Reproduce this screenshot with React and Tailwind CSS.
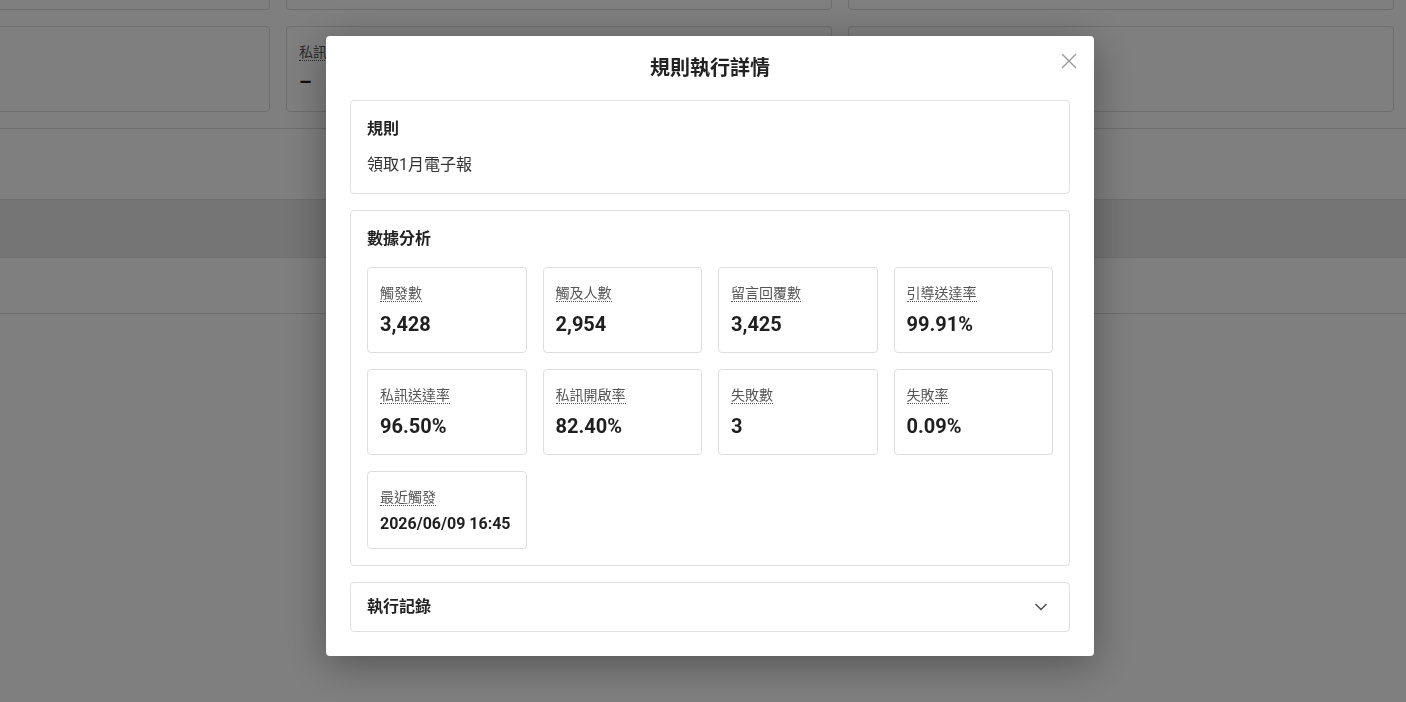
import { ChevronDown } from 'lucide-react';

const metrics = [
    { label: '觸發數', value: '3,428' },
    { label: '觸及人數', value: '2,954' },
    { label: '留言回覆數', value: '3,425' },
    { label: '引導送達率', value: '99.91%' },
    { label: '私訊送達率', value: '96.50%' },
    { label: '私訊開啟率', value: '82.40%' },
    { label: '失敗數', value: '3' },
    { label: '失敗率', value: '0.09%' },
    { label: '最近觸發', value: '2026/06/09 16:45', small: true },
];

const MetricCard = ({ label, value, small }) => (
    <div className="border border-[#dedede] rounded px-3 pt-[15px] pb-[14px] bg-white">
        <div className="text-sm leading-5 text-[#555]">
            <span className="border-b border-dotted border-[#555]">{label}</span>
        </div>
        <div className={`mt-[7px] font-bold text-[#1f1f1f] ${small ? 'text-base leading-5' : 'text-xl leading-7'}`}>
            {value}
        </div>
    </div>
);

// page sitting behind the dialog
const Background = () => (
    <div className="-mt-[76px]">
        <div className="flex gap-4 -ml-[276px]">
            <div className="w-[546px] shrink-0 h-[86px] border border-[#dcdcdc] rounded" />
            <div className="w-[546px] shrink-0 h-[86px] border border-[#dcdcdc] rounded" />
            <div className="w-[546px] shrink-0 h-[86px] border border-[#dcdcdc] rounded" />
        </div>
        <div className="flex gap-4 -ml-[276px] mt-4">
            <div className="w-[546px] shrink-0 h-[86px] border border-[#dcdcdc] rounded" />
            <div className="w-[546px] shrink-0 h-[86px] border border-[#dcdcdc] rounded px-3 pt-[15px]">
                <div className="text-sm leading-5 text-[#555]">
                    <span className="border-b border-dotted border-[#555]">私訊送達率</span>
                </div>
                <div className="mt-[6px] text-xl leading-7 font-bold text-[#1f1f1f]">–</div>
            </div>
            <div className="w-[546px] shrink-0 h-[86px] border border-[#dcdcdc] rounded" />
        </div>
        <div className="mt-4 border-t border-[#dcdcdc] h-[71px]" />
        <div className="h-[59px] bg-[#ebebeb] border-y border-[#dcdcdc]" />
        <div className="h-[56px] border-b border-[#dcdcdc]" />
    </div>
);

export default function App() {
    return (
        <div className="min-h-screen bg-white overflow-hidden font-[Roboto,'Noto_Sans_CJK_TC',sans-serif]">
            <Background />

            <div className="fixed inset-0 bg-black/50 flex items-start justify-center pt-9 pl-[14px]">
                <div className="relative w-[768px] bg-white rounded shadow-[0_8px_40px_rgba(0,0,0,0.35)] px-6 pb-6">
                    <button className="absolute top-[17px] right-[17px] w-4 h-4 text-[#9a9a9a]">
                        <svg width="16" height="16" viewBox="0 0 16 16" fill="none" stroke="currentColor" strokeWidth="1.4" strokeLinecap="round">
                            <path d="M1.5 1.5l13 13M14.5 1.5l-13 13" />
                        </svg>
                    </button>

                    <h2 className="pt-[18px] mb-[18px] text-center text-xl leading-7 font-semibold text-[#222]">
                        規則執行詳情
                    </h2>

                    <div className="flex flex-col gap-4">
                        {/* rule */}
                        <div className="border border-[#e0e0e0] rounded p-4">
                            <div className="text-base leading-6 font-bold text-[#222] mb-3">規則</div>
                            <div className="text-base leading-6 text-[#333]">領取1月電子報</div>
                        </div>

                        {/* stats */}
                        <div className="border border-[#e0e0e0] rounded p-4">
                            <div className="text-base leading-6 font-bold text-[#222] mb-4">數據分析</div>
                            <div className="grid grid-cols-4 gap-4">
                                {metrics.map((m) => (
                                    <MetricCard key={m.label} {...m} />
                                ))}
                            </div>
                        </div>

                        {/* log */}
                        <div className="border border-[#e0e0e0] rounded px-4 py-3 flex items-center justify-between">
                            <span className="text-base leading-6 font-bold text-[#222]">執行記錄</span>
                            <ChevronDown size={20} strokeWidth={2} className="text-[#555] mr-0.5" />
                        </div>
                    </div>
                </div>
            </div>
        </div>
    );
}
